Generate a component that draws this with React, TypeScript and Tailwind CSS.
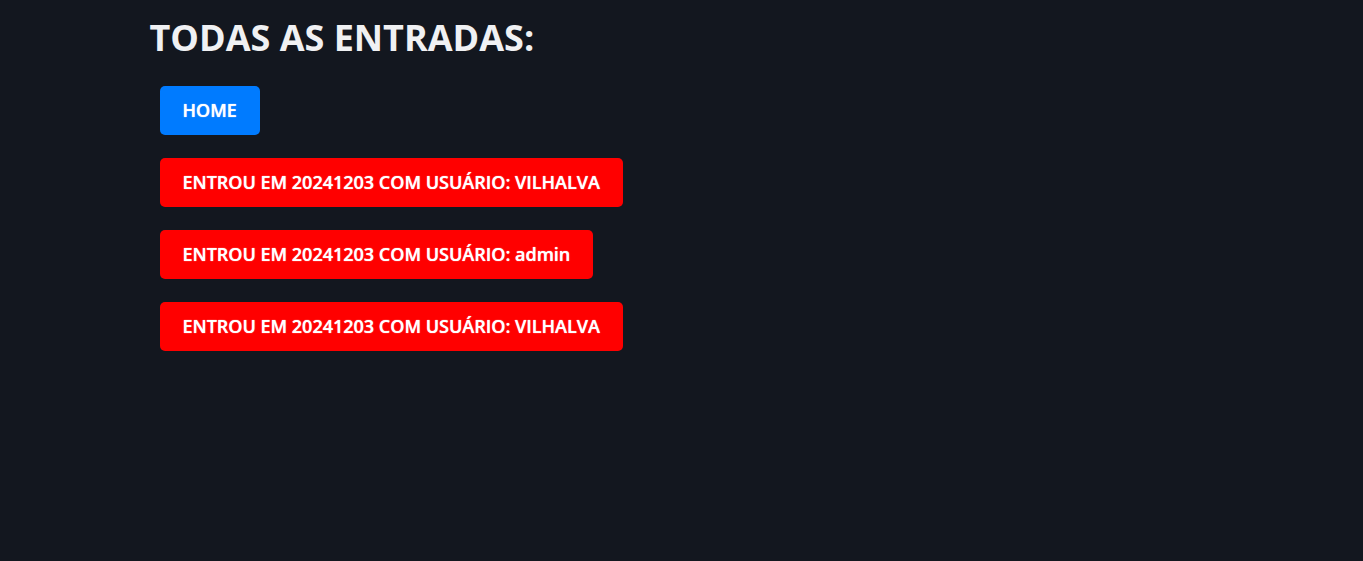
const entries = [
  { id: 1, date: "20241203", user: "VILHALVA" },
  { id: 2, date: "20241203", user: "admin" },
  { id: 3, date: "20241203", user: "VILHALVA" },
];

const buttonBase =
  "mx-[10px] rounded-[5px] px-[23px] py-3 text-[18px] leading-[25px] font-semibold text-white [text-shadow:0_0_1px_#ffffff]";

export default function App() {
  return (
    <div className="min-h-screen bg-[#13171f] font-['Open_Sans','Noto_Sans',sans-serif]">
      <main className="mx-auto w-full max-w-[1100px] px-[18px] pt-4">
        <h1 className="text-[36px] leading-[44px] font-bold text-[#f0f1f3]">TODAS AS ENTRADAS:</h1>
        <div className="mt-[26px] flex flex-col items-start gap-[23px]">
          <a href="#home" className={`${buttonBase} bg-[#007bff]`}>
            HOME
          </a>
          {entries.map((entry) => (
            <button key={entry.id} type="button" className={`${buttonBase} bg-[#ff0000]`}>
              ENTROU EM {entry.date} COM USUÁRIO: {entry.user}
            </button>
          ))}
        </div>
      </main>
    </div>
  );
}
